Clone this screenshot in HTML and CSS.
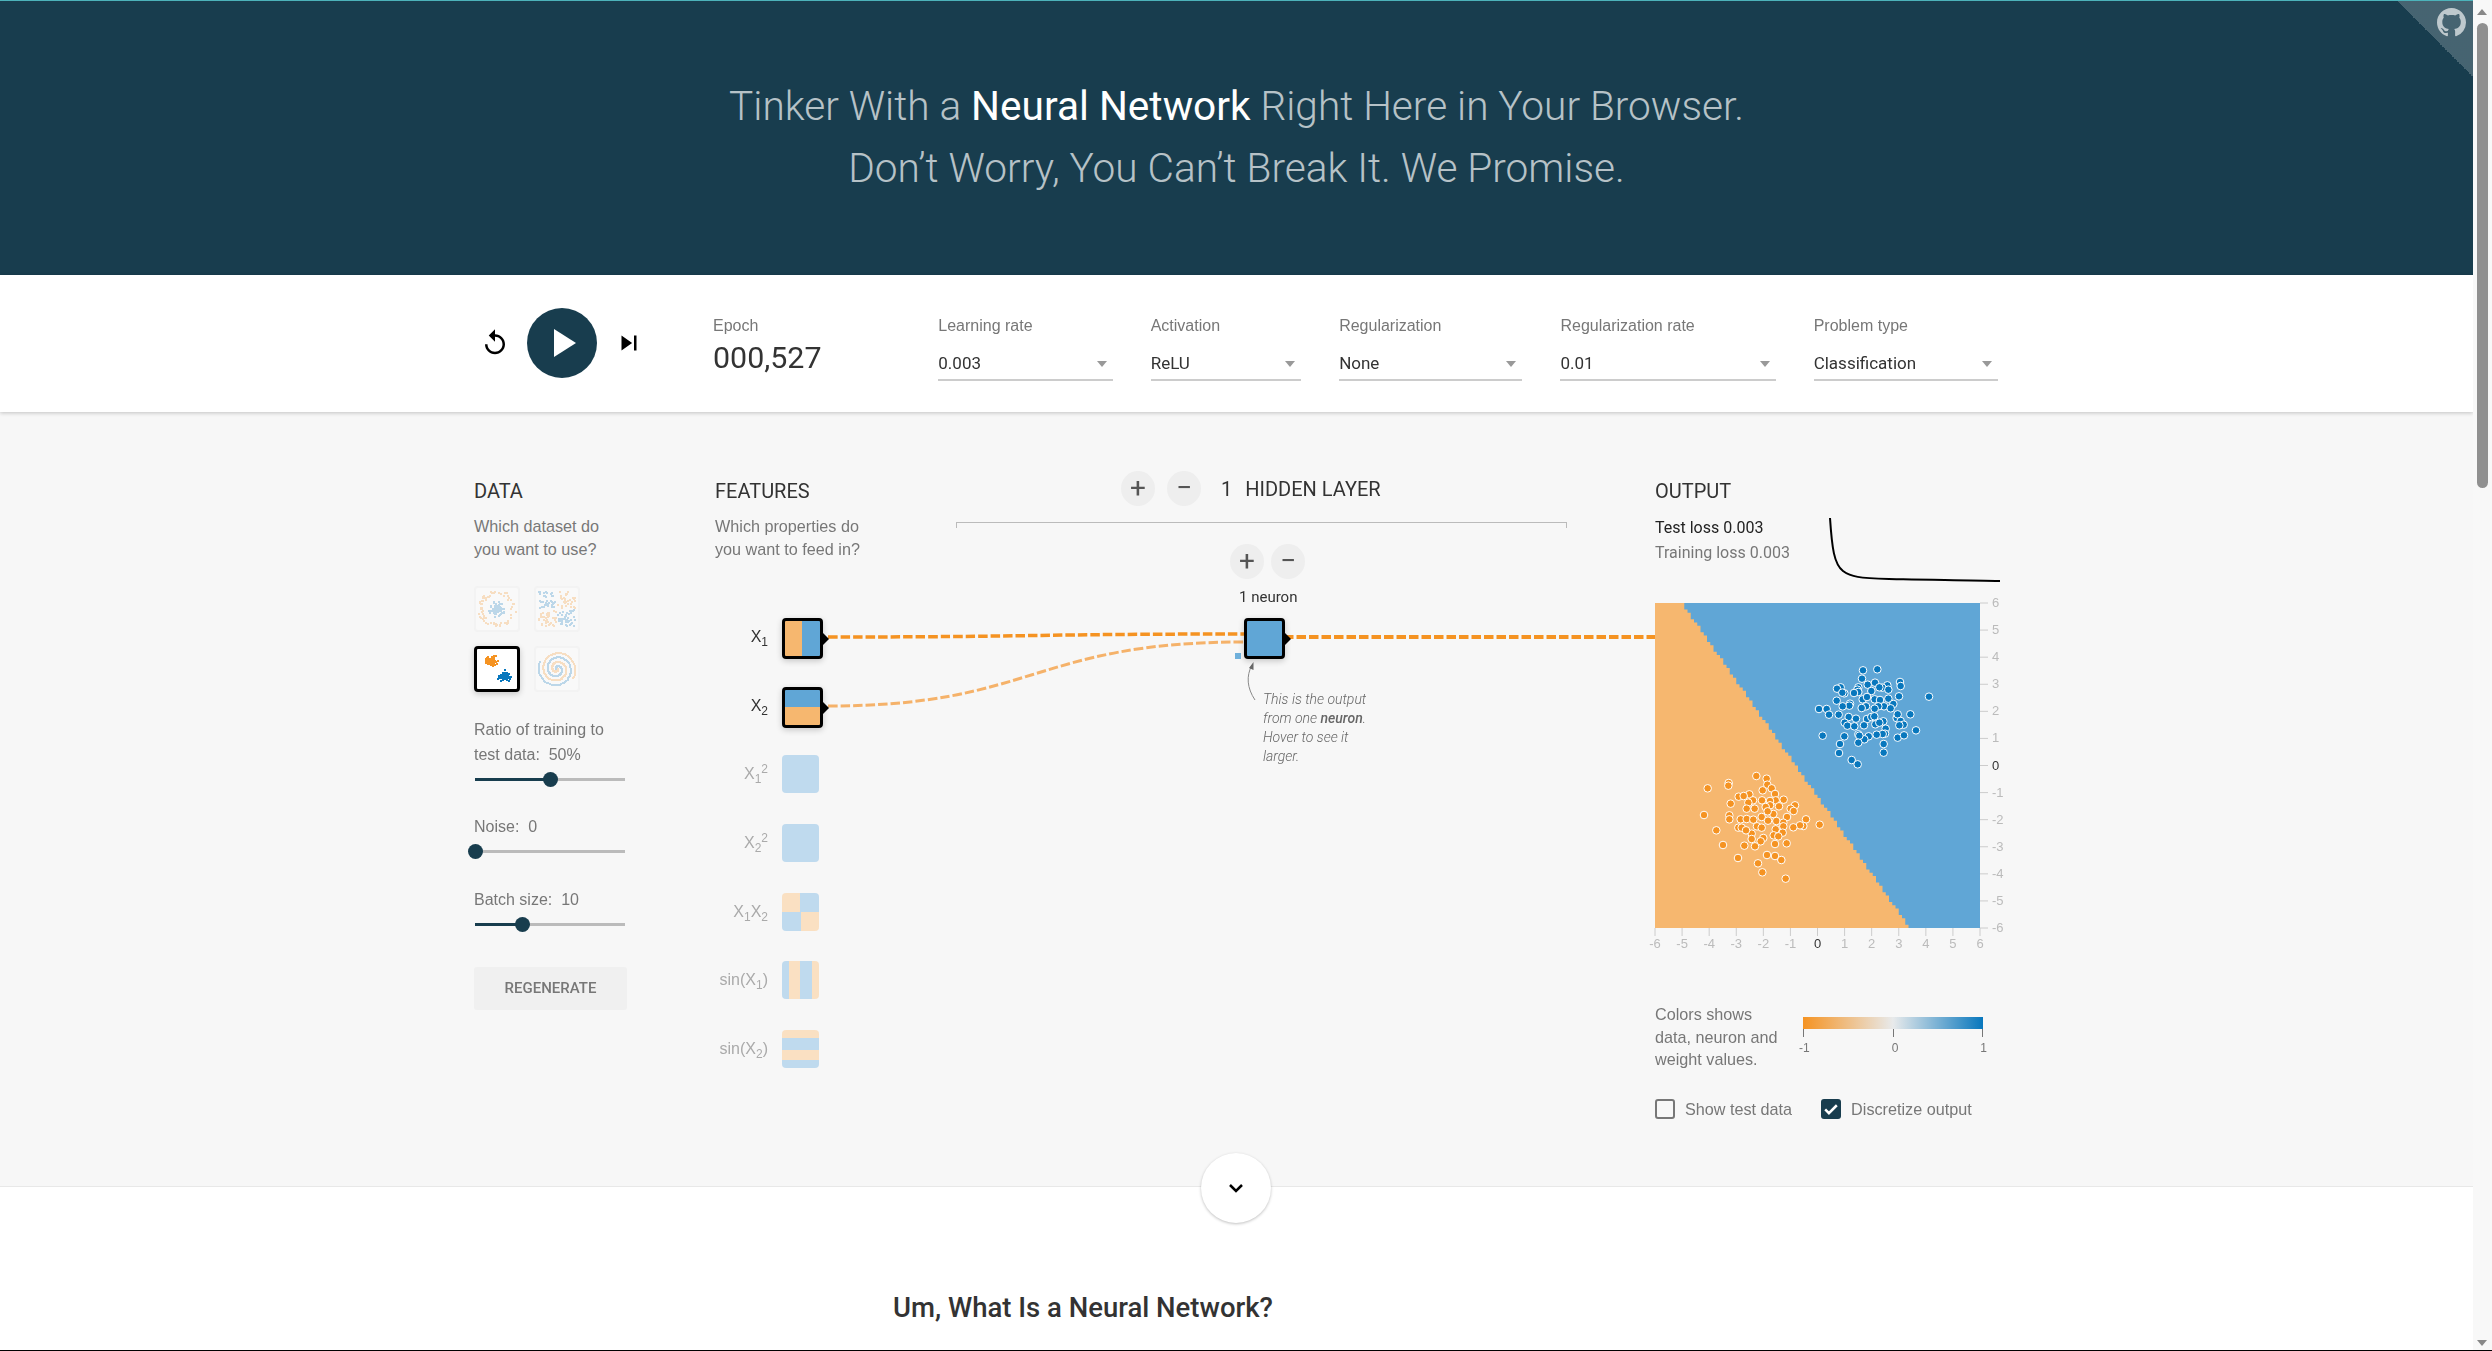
FILE: index.html

```html
<!DOCTYPE html>
<html lang="en">
<head>
  <meta charset="UTF-8">
  <title>A Neural Network Playground</title>
  <link rel="stylesheet" href="styles.css">
</head>
<body>
<div class="window">
  <div class="page">
    <header class="hero">
      <h1>Tinker With a <b>Neural Network</b> Right Here in Your Browser.<br>Don’t Worry, You Can’t Break It. We Promise.</h1>
      <a class="github-corner">
        <svg viewBox="0 0 16 16" width="29" height="29"><path d="M8 0C3.58 0 0 3.58 0 8c0 3.54 2.29 6.53 5.47 7.59.4.07.55-.17.55-.38 0-.19-.01-.82-.01-1.49-2.01.37-2.53-.49-2.69-.94-.09-.23-.48-.94-.82-1.13-.28-.15-.68-.52-.01-.53.63-.01 1.08.58 1.23.82.72 1.21 1.87.87 2.33.66.07-.52.28-.87.51-1.07-1.78-.2-3.64-.89-3.64-3.95 0-.87.31-1.59.82-2.15-.08-.2-.36-1.02.08-2.12 0 0 .67-.21 2.2.82.64-.18 1.32-.27 2-.27.68 0 1.36.09 2 .27 1.53-1.04 2.2-.82 2.2-.82.44 1.1.16 1.92.08 2.12.51.56.82 1.27.82 2.15 0 3.07-1.87 3.75-3.65 3.95.29.25.54.73.54 1.48 0 1.07-.01 1.93-.01 2.2 0 .21.15.46.55.38A8.013 8.013 0 0016 8c0-4.42-3.58-8-8-8z"/></svg>
      </a>
    </header>

    <section class="controls">
      <div class="wrap controls-row">
        <div class="player">
          <svg class="icon-reset" viewBox="0 0 24 24" width="30" height="30"><path d="M12 5V1L7 6l5 5V7c3.31 0 6 2.69 6 6s-2.69 6-6 6-6-2.69-6-6H4c0 4.42 3.58 8 8 8s8-3.58 8-8-3.58-8-8-8z"/></svg>
          <div class="play-button">
            <svg viewBox="0 0 24 24" width="48" height="48"><path d="M8 5v14l11-7z"/></svg>
          </div>
          <svg class="icon-next" viewBox="0 0 24 24" width="30" height="30"><path d="M6 18l8.5-6L6 6v12zM16 6v12h2V6h-2z"/></svg>
        </div>
        <div class="epoch">
          <div class="control-label">Epoch</div>
          <div class="epoch-value">000,527</div>
        </div>
        <div class="select w-learning">
          <div class="control-label">Learning rate</div>
          <div class="select-value">0.003</div>
        </div>
        <div class="select w-activation">
          <div class="control-label">Activation</div>
          <div class="select-value">ReLU</div>
        </div>
        <div class="select w-reg">
          <div class="control-label">Regularization</div>
          <div class="select-value">None</div>
        </div>
        <div class="select w-regrate">
          <div class="control-label">Regularization rate</div>
          <div class="select-value">0.01</div>
        </div>
        <div class="select w-problem">
          <div class="control-label">Problem type</div>
          <div class="select-value">Classification</div>
        </div>
      </div>
    </section>

    <main class="main">
      <div class="wrap columns">
        <svg class="links" width="1182" height="300">
          <path class="link link-strong" d="M354 225C560 225 560 222 770 222"/>
          <path class="link link-soft" d="M354 294C560 294 560 230 770 230"/>
          <path class="link link-output" d="M810 225H1181"/>
        </svg>

        <div class="col-data">
          <h4>DATA</h4>
          <p class="desc">Which dataset do<br>you want to use?</p>
          <div class="datasets">
            <canvas class="dataset" id="ds-circle" width="42" height="42"></canvas>
            <canvas class="dataset" id="ds-xor" width="42" height="42"></canvas>
            <canvas class="dataset selected" id="ds-gauss" width="40" height="40"></canvas>
            <canvas class="dataset" id="ds-spiral" width="42" height="42"></canvas>
          </div>
          <div class="slider-label ratio">Ratio of training to<br>test data:&nbsp; 50%</div>
          <div class="slider"><div class="slider-fill" style="width:50%"></div><div class="slider-thumb" style="left:50%"></div></div>
          <div class="slider-label noise">Noise:&nbsp; 0</div>
          <div class="slider slider-empty"><div class="slider-thumb" style="left:0"></div></div>
          <div class="slider-label batch">Batch size:&nbsp; 10</div>
          <div class="slider"><div class="slider-fill" style="width:31%"></div><div class="slider-thumb" style="left:31%"></div></div>
          <div class="regenerate">REGENERATE</div>
        </div>

        <div class="col-features">
          <h4>FEATURES</h4>
          <p class="desc">Which properties do<br>you want to feed in?</p>
          <div class="feature-list">
            <div class="feature active"><span class="feature-name">X<sub>1</sub></span><div class="node node-x1"></div></div>
            <div class="feature active"><span class="feature-name">X<sub>2</sub></span><div class="node node-x2"></div></div>
            <div class="feature"><span class="feature-name">X<sub>1</sub><sup>2</sup></span><div class="node node-flat"></div></div>
            <div class="feature"><span class="feature-name">X<sub>2</sub><sup>2</sup></span><div class="node node-flat"></div></div>
            <div class="feature"><span class="feature-name">X<sub>1</sub>X<sub>2</sub></span><div class="node node-xy"></div></div>
            <div class="feature"><span class="feature-name">sin(X<sub>1</sub>)</span><div class="node node-sin1"></div></div>
            <div class="feature"><span class="feature-name">sin(X<sub>2</sub>)</span><div class="node node-sin2"></div></div>
          </div>
        </div>

        <div class="col-hidden">
          <div class="layers-head">
            <div class="round-button">+</div>
            <div class="round-button">−</div>
            <span class="layers-count">1</span>
            <span class="layers-title">HIDDEN LAYER</span>
          </div>
          <div class="bracket"></div>
          <div class="layer">
            <div class="layer-buttons">
              <div class="round-button">+</div>
              <div class="round-button">−</div>
            </div>
            <div class="neuron-count">1 neuron</div>
            <div class="node active-node neuron"><span class="neuron-badge"></span></div>
            <div class="callout">
              <svg class="callout-arrow" width="24" height="42"><path d="M16 38C8 26 7 14 13 3"/><path class="head" d="M14.500 0L14.500 8L10 6z"/></svg>
              <p>This is the output<br>from one <b>neuron</b>.<br>Hover to see it<br>larger.</p>
            </div>
          </div>
        </div>

        <div class="col-output">
          <h4>OUTPUT</h4>
          <div class="loss">
            <div class="loss-text">
              <div class="test-loss">Test loss 0.003</div>
              <div class="train-loss">Training loss 0.003</div>
            </div>
            <svg class="loss-chart" width="171" height="64"><path d="M1 0C3 30 5 46 14 53C22 59 30 60 60 61C100 62 140 62 171 63"/></svg>
          </div>
          <svg id="heatmap" class="heatmap" width="345" height="352"></svg>
          <div class="legend">
            <p>Colors shows<br>data, neuron and<br>weight values.</p>
            <div class="legend-scale">
              <div class="legend-bar"></div>
              <div class="legend-ticks"><span>-1</span><span>0</span><span>1</span></div>
            </div>
          </div>
          <div class="checks">
            <label class="check"><span class="box"></span>Show test data</label>
            <label class="check"><span class="box checked"><svg viewBox="0 0 24 24" width="20" height="20"><path d="M5 12.500l4.500 4.500L19 7.500" /></svg></span>Discretize output</label>
          </div>
        </div>
      </div>
      <div class="more-button">
        <svg viewBox="0 0 24 24" width="24" height="24"><path d="M6 9l6 6 6-6"/></svg>
      </div>
    </main>

    <article class="article">
      <h2>Um, What Is a Neural Network?</h2>
    </article>
  </div>

  <div class="scrollbar">
    <span class="arrow-up"></span>
    <div class="scroll-thumb"></div>
    <span class="arrow-down"></span>
  </div>
</div>
<script src="script.js"></script>
</body>
</html>
```

FILE: styles.css

```css
* {
  box-sizing: border-box;
}

html, body {
  margin: 0;
  padding: 0;
  height: 1351px;
  overflow: hidden;
  background: #fff;
  font-family: "Liberation Sans", Arial, sans-serif;
}

.window {
  display: flex;
  height: 1351px;
  border-bottom: 1px solid #000;
}

.page {
  width: 2473px;
  overflow: hidden;
  flex: none;
}

.wrap {
  width: 1524px;
  margin: 0 0 0 474px;
}

/* header */
.hero {
  position: relative;
  height: 275px;
  background: #183d4e;
  border-top: 1px solid #4cb3ba;
  padding-top: 74px;
  overflow: hidden;
}

.hero h1 {
  margin: 0;
  text-align: center;
  font: 300 40.600px/62px Roboto, sans-serif;
  color: rgba(255, 255, 255, 0.7);
}

.hero b {
  font-weight: 400;
  color: #fff;
}

.github-corner {
  position: absolute;
  top: 0;
  right: 0;
  width: 76px;
  height: 76px;
  background: linear-gradient(to top right, transparent 50%, rgba(255, 255, 255, 0.2) 50%);
}

.github-corner svg {
  position: absolute;
  top: 7px;
  right: 7px;
  fill: rgba(255, 255, 255, 0.65);
}

/* top controls */
.controls {
  position: relative;
  z-index: 2;
  height: 137px;
  background: #fff;
  box-shadow: 0 1px 4px rgba(0, 0, 0, 0.22);
}

.controls-row {
  display: flex;
  align-items: flex-start;
  gap: 38px;
  padding-top: 42px;
}

.player {
  display: flex;
  align-items: center;
  gap: 17px;
  height: 70px;
  margin: -9px 31px 0 6px;
}

.play-button {
  display: flex;
  align-items: center;
  justify-content: center;
  width: 70px;
  height: 70px;
  border-radius: 50%;
  background: #183d4e;
  fill: #fff;
}

.control-label {
  font-size: 16px;
  line-height: 18px;
  color: #777;
}

.epoch {
  width: 188px;
}

.epoch-value {
  margin-top: 5px;
  font: 400 30.400px/36px Roboto, sans-serif;
  color: #333;
}

.select-value {
  position: relative;
  margin-top: 15px;
  height: 31px;
  font: 400 17px/26px Roboto, sans-serif;
  color: #333;
  border-bottom: 2px solid #ccc;
}

.select-value::after {
  content: "";
  position: absolute;
  right: 6px;
  top: 11px;
  border-left: 5px solid transparent;
  border-right: 5px solid transparent;
  border-top: 6px solid #999;
}

.w-learning { width: 175px; }
.w-activation { width: 151px; }
.w-reg { width: 184px; }
.w-regrate { width: 216px; }
.w-problem { width: 185px; }

/* main columns */
.main {
  position: relative;
  height: 775px;
  background: #f7f7f7;
  border-bottom: 1px solid #e8e8e8;
}

.columns {
  position: relative;
  display: flex;
  padding-top: 68px;
}

h4 {
  margin: 0;
  font: 400 20px/22px Roboto, sans-serif;
  color: #333;
}

.desc {
  margin: 13px 0 0;
  font-size: 16.200px;
  line-height: 23px;
  color: #777;
}

.links {
  position: absolute;
  left: 0;
  top: 0;
  pointer-events: none;
}

.link {
  fill: none;
  stroke-dasharray: 9.500 3;
}

.link-strong {
  stroke: #f59322;
  stroke-width: 3.500px;
}

.link-soft {
  stroke: #f5b26a;
  stroke-width: 3px;
}

.link-output {
  stroke: #f59322;
  stroke-width: 4px;
}

/* data column */
.col-data {
  width: 241px;
  flex: none;
}

.datasets {
  display: grid;
  grid-template-columns: 46px 46px;
  column-gap: 14px;
  row-gap: 14px;
  margin-top: 25px;
}

.dataset {
  width: 46px;
  height: 46px;
  border: 2px solid #e4e4e4;
  border-radius: 4px;
  background: #fff;
  opacity: 0.25;
}

.dataset.selected {
  border: 3px solid #000;
  opacity: 1;
  box-shadow: 0 2px 6px rgba(0, 0, 0, 0.2);
}

.slider-label {
  font-size: 16px;
  line-height: 25px;
  color: #777;
}

.ratio {
  margin-top: 25px;
}

.noise {
  margin-top: 33px;
}

.batch {
  margin-top: 34px;
}

.slider {
  position: relative;
  width: 150px;
  height: 3px;
  margin: 11px 0 0 1px;
  background: #bbb;
}

.slider-empty {
  margin-top: 11px;
}

.slider-fill {
  height: 3px;
  background: #183d4e;
}

.slider-thumb {
  position: absolute;
  top: -6px;
  width: 15px;
  height: 15px;
  margin-left: -7px;
  border-radius: 50%;
  background: #183d4e;
}

.regenerate {
  width: 153px;
  height: 43px;
  margin-top: 41px;
  border-radius: 3px;
  background: #f0f0f0;
  text-align: center;
  font: 500 15px/43px Roboto, sans-serif;
  color: #777;
}

/* features column */
.col-features {
  width: 240px;
  flex: none;
}

.feature-list {
  margin-top: 57px;
}

.feature {
  display: flex;
  height: 68.670px;
  gap: 14px;
  color: #aaa;
}

.feature.active {
  color: #333;
}

.feature-name {
  width: 53px;
  flex: none;
  margin-top: 8px;
  text-align: right;
  white-space: nowrap;
  font-size: 16px;
  line-height: 22px;
}

.feature-name sub,
.feature-name sup {
  font-size: 12px;
  line-height: 0;
}

.feature-name sup {
  vertical-align: 6px;
}

.node {
  position: relative;
  width: 37px;
  height: 38px;
  border-radius: 4px;
}

.feature.active .node,
.active-node {
  width: 41px;
  height: 41px;
  border: 3px solid #000;
  box-shadow: 0 2px 6px rgba(0, 0, 0, 0.2);
}

.feature.active .node::after,
.active-node::after {
  content: "";
  position: absolute;
  top: 12px;
  left: 38px;
  border-top: 6px solid transparent;
  border-bottom: 6px solid transparent;
  border-left: 6px solid #000;
}

.node-x1 {
  background: linear-gradient(90deg, #f6b76f 50%, #60a6d6 50%);
}

.node-x2 {
  background: linear-gradient(180deg, #60a6d6 50%, #f6b76f 50%);
}

.node-flat {
  background: #bfdaee;
}

.node-xy {
  background: conic-gradient(#bfdaee 0 25%, #fae0c2 0 50%, #bfdaee 0 75%, #fae0c2 0);
}

.node-sin1 {
  background: linear-gradient(90deg, #bfdaee 20%, #fae0c2 20% 50%, #bfdaee 50% 80%, #fae0c2 80%);
}

.node-sin2 {
  background: linear-gradient(180deg, #fae0c2 21%, #bfdaee 21% 52%, #fae0c2 52% 80%, #bfdaee 80%);
}

/* hidden layers */
.col-hidden {
  width: 700px;
  flex: none;
  margin-top: -9px;
}

.layers-head {
  display: flex;
  align-items: center;
  gap: 12px;
  margin-left: 166px;
  height: 35px;
}

.round-button {
  width: 34px;
  height: 35px;
  border-radius: 50%;
  background: #eee;
  text-align: center;
  font: 400 28px/33px Roboto, sans-serif;
  color: #555;
}

.layers-count,
.layers-title {
  font: 400 20px/22px Roboto, sans-serif;
  color: #333;
}

.layers-count {
  margin-left: 8px;
}

.layers-title {
  margin-left: 1px;
}

.bracket {
  width: 611px;
  height: 6px;
  margin: 16px 0 0 1px;
  border: 1px solid #bbb;
  border-bottom: 0;
}

.layer {
  margin: 16px 0 0 275px;
  width: 140px;
}

.layer-buttons {
  display: flex;
  gap: 7px;
}

.neuron-count {
  margin-top: 9px;
  margin-left: 9px;
  font: 400 15px/18px Roboto, sans-serif;
  color: #333;
}

.neuron {
  margin: 12px 0 0 14px;
  background: #60a6d6;
}

.neuron-badge {
  position: absolute;
  left: -12px;
  top: 32px;
  width: 6px;
  height: 6px;
  background: #6fb0db;
}

.callout {
  position: relative;
  margin: 31px 0 0 33px;
}

.callout p {
  margin: 0;
  width: 120px;
  font: italic 300 14px/19px Roboto, sans-serif;
  color: #666;
}

.callout b {
  font-weight: 500;
}

.callout-arrow {
  position: absolute;
  left: -24px;
  top: -28px;
  fill: none;
  stroke: #888;
}

.callout-arrow .head {
  fill: #666;
  stroke: none;
}

/* output column */
.col-output {
  position: relative;
  width: 345px;
  flex: none;
}

.loss {
  display: flex;
  justify-content: space-between;
  height: 88px;
  margin-top: 13px;
}

.loss-text {
  font: 400 16px/25px Roboto, sans-serif;
}

.test-loss {
  color: #222;
}

.train-loss {
  color: #777;
}

.loss-chart {
  margin-top: 3px;
  fill: none;
  stroke: #000;
  stroke-width: 2px;
}

.heatmap {
  display: block;
  overflow: visible;
}

.tick-label {
  font: 13px "Liberation Sans", Arial, sans-serif;
  fill: #bbb;
}

.tick-label.zero {
  fill: #333;
}

.tick {
  stroke: #ccc;
  stroke-width: 1px;
}

.legend {
  display: flex;
  margin-top: 48px;
  color: #777;
}

.legend p {
  margin: 0;
  width: 148px;
  font-size: 16.200px;
  line-height: 22.500px;
}

.legend-scale {
  width: 180px;
  margin-top: 14px;
}

.legend-bar {
  height: 12px;
  background: linear-gradient(90deg, #f59322, #e8eaeb 50%, #0877bd);
}

.legend-ticks {
  display: flex;
  justify-content: space-between;
  background:
    linear-gradient(#777, #777) 4px 0 / 1px 8px no-repeat,
    linear-gradient(#777, #777) 50% 0 / 1px 8px no-repeat,
    linear-gradient(#777, #777) calc(100% - 4px) 0 / 1px 8px no-repeat;
  margin: 0 -4px;
  padding-top: 12px;
  font-size: 12px;
  line-height: 14px;
  color: #777;
}

.checks {
  display: flex;
  gap: 29px;
  margin-top: 28px;
}

.check {
  display: flex;
  align-items: center;
  gap: 10px;
  font-size: 16.200px;
  line-height: 20px;
  color: #777;
}

.box {
  width: 20px;
  height: 20px;
  border: 2px solid #777;
  border-radius: 3px;
}

.box.checked {
  border: 0;
  background: #183d4e;
}

.box svg {
  display: block;
  fill: none;
  stroke: #fff;
  stroke-width: 3px;
}

.more-button {
  position: absolute;
  left: 1201px;
  bottom: -37px;
  display: flex;
  align-items: center;
  justify-content: center;
  width: 70px;
  height: 70px;
  border-radius: 50%;
  background: #fff;
  box-shadow: 0 1px 3px rgba(0, 0, 0, 0.25);
  z-index: 2;
}

.more-button svg {
  fill: none;
  stroke: #000;
  stroke-width: 2.500px;
}

/* article */
.article {
  padding: 103px 0 0 893px;
}

.article h2 {
  margin: 0;
  font: 500 27.500px/36px Roboto, sans-serif;
  color: #333;
}

/* fake browser scrollbar */
.scrollbar {
  position: relative;
  flex: 1;
  background: #f8f8f8;
}

.scroll-thumb {
  position: absolute;
  top: 23px;
  left: 4px;
  width: 11px;
  height: 465px;
  border-radius: 6px;
  background: #909090;
}

.arrow-up,
.arrow-down {
  position: absolute;
  left: 4px;
  border-left: 5.500px solid transparent;
  border-right: 5.500px solid transparent;
}

.arrow-up {
  top: 9px;
  border-bottom: 6px solid #888;
}

.arrow-down {
  bottom: 4px;
  border-top: 6px solid #888;
}
```

FILE: script.js

```js
// little seeded random, so the dots stay put between loads
var seed = 42;
function rnd() {
  seed = (seed * 16807) % 2147483647;
  return seed / 2147483647;
}
function gauss() {
  return Math.sqrt(-2 * Math.log(rnd())) * Math.cos(2 * Math.PI * rnd());
}

var ORANGE = "#f59322";
var BLUE = "#0877bd";

function dot(ctx, x, y, color) {
  ctx.fillStyle = color;
  ctx.fillRect(Math.round(x), Math.round(y), 2, 2);
}

function drawDatasets() {
  var i, a, r, ctx;

  ctx = document.getElementById("ds-circle").getContext("2d");
  for (i = 0; i < 70; i++) {
    a = rnd() * 2 * Math.PI;
    r = rnd() * 8;
    dot(ctx, 20 + r * Math.cos(a), 20 + r * Math.sin(a), BLUE);
    r = 14 + rnd() * 5;
    dot(ctx, 20 + r * Math.cos(a + 1), 20 + r * Math.sin(a + 1), ORANGE);
  }

  ctx = document.getElementById("ds-xor").getContext("2d");
  for (i = 0; i < 170; i++) {
    var x = 2 + rnd() * 36;
    var y = 2 + rnd() * 36;
    if (Math.abs(x - 20) < 1 || Math.abs(y - 20) < 1) continue;
    dot(ctx, x, y, (x - 20) * (y - 20) > 0 ? BLUE : ORANGE);
  }

  ctx = document.getElementById("ds-gauss").getContext("2d");
  for (i = 0; i < 90; i++) {
    dot(ctx, 12 + gauss() * 2.6 + (i % 5) * 0.5, 10 + gauss() * 1.9 + (i % 5) * 0.3, ORANGE);
    dot(ctx, 26 + gauss() * 2.6, 26 + gauss() * 2, BLUE);
  }

  ctx = document.getElementById("ds-spiral").getContext("2d");
  for (i = 0; i < 130; i++) {
    r = i / 130 * 19;
    a = i / 130 * 4.2 * Math.PI;
    dot(ctx, 20 + r * Math.cos(a + 3), 20 + r * Math.sin(a + 3), BLUE);
    dot(ctx, 20 + r * Math.cos(a), 20 + r * Math.sin(a), ORANGE);
  }
}

// points read off the picture, 3x coords with the plot corner at 45,38
var bluePoints = [[669,240],[712,237],[666,265],[780,275],[782,287],[705,277],[683,283],[742,285],[727,292],[718,291],[602,291],[591,295],[655,291],[652,298],[613,309],[607,307],[655,305],[642,308],[745,298],[694,302],[590,331],[630,340],[628,346],[608,348],[668,327],[681,320],[704,327],[720,329],[745,325],[777,318],[867,319],[760,341],[732,348],[715,348],[678,348],[665,353],[704,355],[752,354],[537,356],[560,356],[567,373],[596,373],[626,380],[648,385],[681,386],[694,380],[703,378],[730,393],[770,383],[773,372],[811,372],[782,392],[791,403],[778,405],[614,397],[622,406],[643,408],[672,405],[706,402],[718,397],[737,415],[735,430],[728,431],[710,433],[686,438],[673,447],[655,432],[658,436],[613,438],[548,436],[655,457],[600,461],[731,461],[597,488],[731,487],[635,509],[653,522],[773,442],[792,435],[828,420]];
var orangePoints = [[349,557],[380,565],[266,578],[265,586],[382,583],[395,594],[203,594],[368,600],[405,611],[328,612],[296,619],[311,617],[339,630],[366,630],[431,628],[407,630],[325,637],[272,640],[390,632],[390,645],[417,648],[465,645],[452,655],[461,662],[320,655],[344,655],[377,650],[400,671],[268,675],[192,674],[441,680],[365,680],[268,687],[302,687],[320,686],[340,688],[383,663],[384,691],[409,692],[430,697],[498,687],[490,707],[480,705],[539,703],[460,711],[430,708],[295,712],[305,712],[351,708],[365,712],[229,720],[407,717],[428,727],[335,730],[318,720],[401,735],[415,738],[335,746],[370,743],[362,753],[249,764],[313,766],[345,768],[405,761],[440,759],[381,794],[405,797],[424,809],[294,803],[354,819],[367,846],[437,865]];

var SVG_NS = "http://www.w3.org/2000/svg";
function add(parent, tag, attrs, text) {
  var el = document.createElementNS(SVG_NS, tag);
  for (var k in attrs) el.setAttribute(k, attrs[k]);
  if (text !== undefined) el.textContent = text;
  parent.appendChild(el);
  return el;
}

function drawHeatmap() {
  var svg = document.getElementById("heatmap");
  var size = 325;
  var step = 3.25;
  var unit = size / 12;

  add(svg, "rect", { width: size, height: size, fill: "#60a6d6" });

  // orange side of the decision line, stepped like the low res canvas
  var pts = ["0,0"];
  for (var y = 0; y < size; y += step) {
    var x = Math.round((28 + y * 228 / size) / step) * step;
    pts.push(x + "," + y);
    pts.push(x + "," + (y + step));
  }
  pts.push("0," + size);
  add(svg, "polygon", { points: pts.join(" "), fill: "#f6b76f" });

  function points(list, color) {
    list.forEach(function (p) {
      add(svg, "circle", {
        cx: (p[0] - 45) / 3, cy: (p[1] - 38) / 3, r: 3.8,
        fill: color, stroke: "#fff", "stroke-width": 1
      });
    });
  }
  points(bluePoints, BLUE);
  points(orangePoints, ORANGE);

  for (var i = -6; i <= 6; i++) {
    var pos = (i + 6) * unit;
    add(svg, "line", { class: "tick", x1: pos, x2: pos, y1: size, y2: size + 8 });
    add(svg, "text", {
      class: "tick-label" + (i === 0 ? " zero" : ""),
      x: pos, y: size + 20, "text-anchor": "middle"
    }, i);
    var ypos = size - pos;
    add(svg, "line", { class: "tick", x1: size, x2: size + 8, y1: ypos, y2: ypos });
    add(svg, "text", {
      class: "tick-label" + (i === 0 ? " zero" : ""),
      x: size + 12, y: ypos + 4
    }, i);
  }
}

drawDatasets();
drawHeatmap();
```
